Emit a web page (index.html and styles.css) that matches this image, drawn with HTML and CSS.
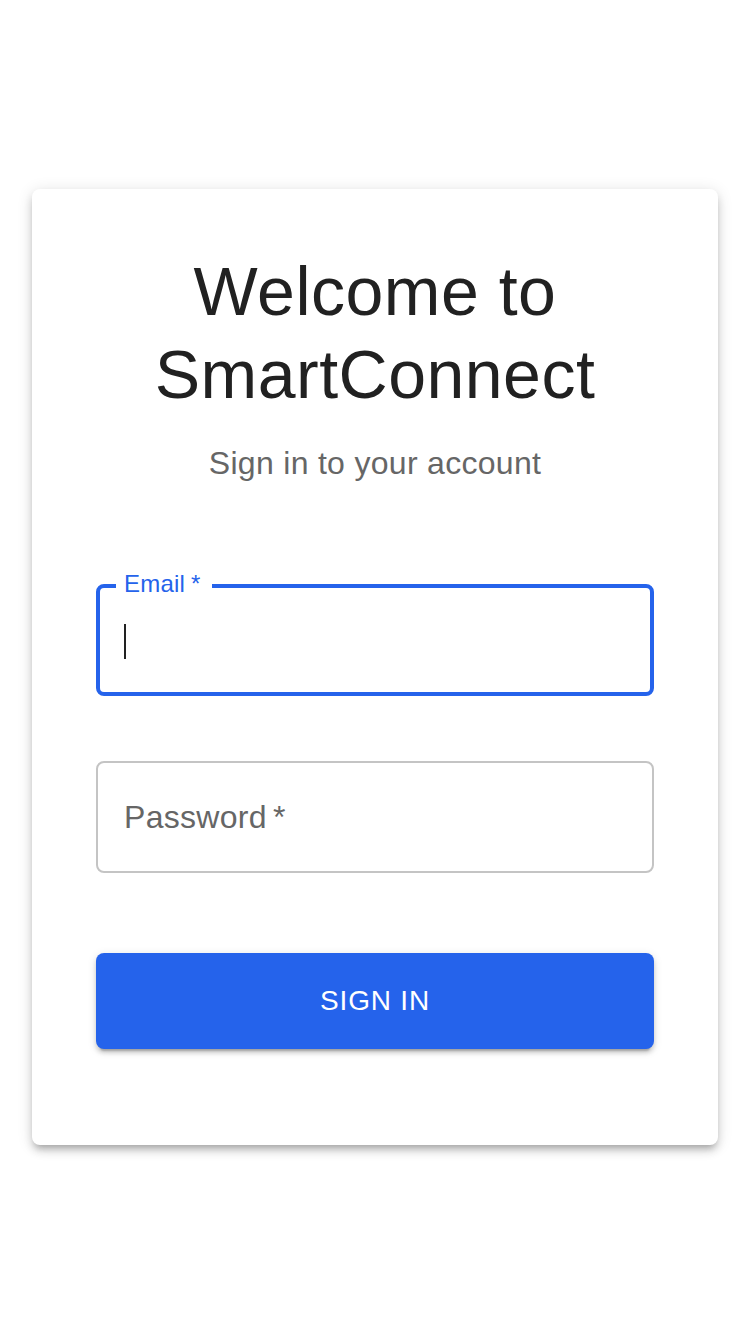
FILE: index.html
```html
<!DOCTYPE html>
<html lang="en">
<head>
<meta charset="utf-8">
<title>SmartConnect – Sign in</title>
<link rel="stylesheet" href="styles.css">
</head>
<body>
<main class="page">
  <section class="card">
    <h1 class="title">Welcome to SmartConnect</h1>
    <p class="subtitle">Sign in to your account</p>
    <form class="form">
      <div class="field field-focused">
        <label class="field-label-small" for="email">Email<span class="req">*</span></label>
        <div class="field-box">
          <span class="caret"></span>
          <input id="email" class="field-input" type="email">
        </div>
      </div>
      <div class="field">
        <div class="field-box">
          <label class="field-label" for="password">Password<span class="req">*</span></label>
          <input id="password" class="field-input" type="password">
        </div>
      </div>
      <button type="button" class="btn">Sign In</button>
    </form>
  </section>
</main>
</body>
</html>
```

FILE: styles.css
```css
* { box-sizing: border-box; }
html, body { margin: 0; padding: 0; background: #fff; }
body {
  font-family: "Liberation Sans", Arial, sans-serif;
  color: rgba(0,0,0,0.87);
}
.page {
  min-height: 1334px;
  display: flex;
  align-items: center;
  justify-content: center;
  padding: 0 32px;
}
.card {
  width: 100%;
  background: #fff;
  border-radius: 8px;
  padding: 61px 64px 64px;
  box-shadow: 0 6px 6px -4px rgba(0,0,0,0.2), 0 6px 8px 0 rgba(0,0,0,0.14), 0 2px 16px 0 rgba(0,0,0,0.12);
}
.title {
  margin: 0 0 23px;
  font-size: 68px;
  font-weight: 400;
  line-height: 83px;
  text-align: center;
  color: #212121;
  letter-spacing: 0.5px;
}
.subtitle {
  margin: 0;
  font-size: 32px;
  line-height: 48px;
  letter-spacing: 0.3px;
  text-align: center;
  color: #666;
}
.form {
  display: flex;
  flex-direction: column;
  margin-top: 97px;
}
.field {
  position: relative;
}
.field + .field { margin-top: 65px; }
.field-box {
  position: relative;
  height: 112px;
  border: 2px solid #c4c4c4;
  border-radius: 8px;
  display: flex;
  align-items: center;
  padding: 0 26px;
}
.field-focused .field-box {
  border: 4px solid #2563eb;
  padding: 0 24px;
}
.field-label-small {
  position: absolute;
  left: 20px;
  top: -16px;
  z-index: 1;
  padding: 0 11px 0 8px;
  background: #fff;
  font-size: 24px;
  line-height: 32px;
  color: #2563eb;
  letter-spacing: 0.2px;
}
.field-label {
  position: absolute;
  left: 26px;
  top: 50%;
  transform: translateY(-50%);
  font-size: 32px;
  line-height: 40px;
  color: #666;
  letter-spacing: 0.3px;
}
.req { margin-left: 6px; }
.field-input {
  flex: 1;
  border: 0;
  outline: none;
  background: transparent;
  font: inherit;
  font-size: 32px;
  caret-color: transparent;
  min-width: 0;
}
.caret {
  position: absolute;
  left: 24px;
  top: 36px;
  width: 2px;
  height: 35px;
  background: #222;
}
.btn {
  margin-top: 80px;
  margin-bottom: 32px;
  height: 96px;
  border: 0;
  border-radius: 8px;
  background: #2563eb;
  color: #fff;
  font-family: "Liberation Sans", Arial, sans-serif;
  font-size: 28px;
  font-weight: 400;
  letter-spacing: 0.8px;
  text-transform: uppercase;
  box-shadow: 0 6px 2px -4px rgba(0,0,0,0.2), 0 4px 4px 0 rgba(0,0,0,0.14), 0 2px 10px 0 rgba(0,0,0,0.12);
  cursor: pointer;
}
```
